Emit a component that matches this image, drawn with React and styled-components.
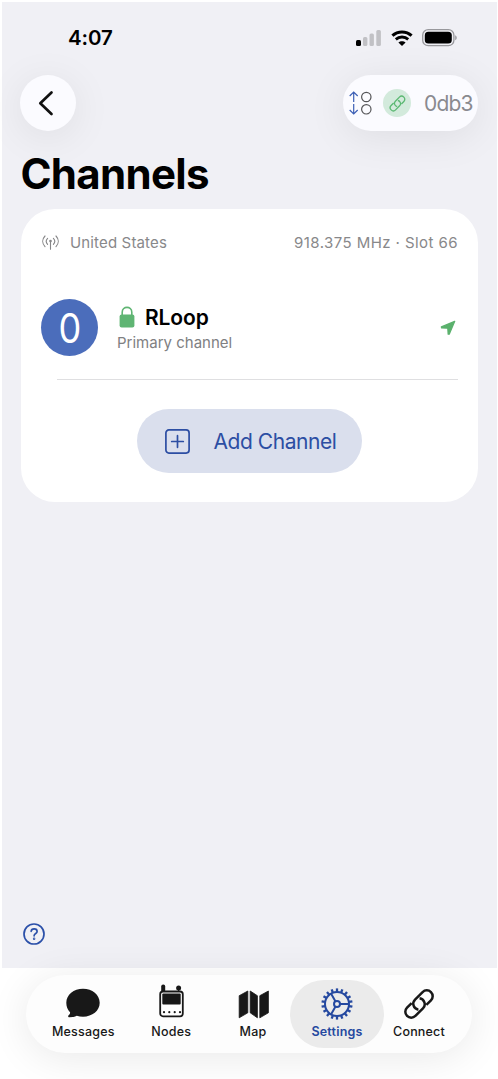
import React from "react";
import styled, { createGlobalStyle } from "styled-components";

const GlobalStyle = createGlobalStyle`
	* {
		box-sizing: border-box;
	}
	body {
		margin: 0;
		background: #ffffff;
		font-family: Inter, "Liberation Sans", sans-serif;
	}
	svg {
		display: block;
		flex: none;
	}
`;

const Screen = styled.div`
	height: 1079px;
	padding: 2px 1px 0 2px;
	overflow: hidden;
	display: flex;
	flex-direction: column;
`;
const Main = styled.main`
	height: 966px;
	padding: 0 19px;
	background: #f0f0f5;
	display: flex;
	flex-direction: column;
`;
const StatusBar = styled.div`
	height: 73px;
	padding: 0 20px 0 47px;
	display: flex;
	align-items: center;
	justify-content: space-between;
`;
const Clock = styled.span`
	font-size: 20.5px;
	font-weight: 600;
	letter-spacing: -0.1px;
	line-height: 24px;
	margin-top: -2px;
`;
const StatusIcons = styled.div`
	display: flex;
	align-items: center;
	margin-top: -2px;
	gap: 9px;
`;
const NavBar = styled.div`
	height: 56px;
	display: flex;
	justify-content: space-between;
`;
const BackButton = styled.button`
	width: 56px;
	height: 56px;
	margin-left: -0.6px;
	padding: 0 0 0 16px;
	border: none;
	border-radius: 50%;
	background: #fbfbff;
	box-shadow: 0 6px 40px rgba(0, 0, 0, 0.08);
	display: flex;
	align-items: center;
`;
const StatusPill = styled.div`
	width: 135px;
	height: 56px;
	border-radius: 28px;
	background: #fbfbff;
	box-shadow: 0 6px 40px rgba(0, 0, 0, 0.08);
	display: flex;
	align-items: center;
	padding-left: 6px;
`;
const LinkBadge = styled.div`
	width: 28px;
	height: 28px;
	margin: 0 13px 0 11px;
	border-radius: 50%;
	background: #d3eadc;
	color: #5bb872;
	display: flex;
	align-items: center;
	justify-content: center;
`;
const NodeName = styled.span`
	color: #8a8a8f;
	font-size: 21px;
	letter-spacing: -0.8px;
`;
const Title = styled.h1`
	margin: 18px 0 10px -0.5px;
	font-size: 42px;
	font-weight: 700;
	line-height: 50px;
	letter-spacing: -0.7px;
`;
const Card = styled.section`
	height: 293px;
	padding: 0 20px;
	border-radius: 34px;
	background: #ffffff;
`;
const RadioInfo = styled.div`
	height: 67px;
	padding-left: 1px;
	display: flex;
	align-items: center;
	color: #88888a;
	font-size: 15px;
	letter-spacing: 0.15px;
`;
const Region = styled.span`
	flex: 1;
	margin-left: 11px;
`;
const Frequency = styled.span`
	letter-spacing: 0.43px;
`;
const ChannelRow = styled.div`
	height: 103px;
	padding-right: 2px;
	display: flex;
	align-items: center;
`;
const Avatar = styled.div`
	width: 57px;
	height: 57px;
	border-radius: 50%;
	background: #4b6dbb;
	color: #ffffff;
	font-size: 41px;
	font-weight: 400;
	display: flex;
	align-items: center;
	justify-content: center;
	span {
		transform: scaleX(0.88);
	}
`;
const ChannelText = styled.div`
	flex: 1;
	margin-left: 19px;
	padding-top: 4px;
`;
const ChannelName = styled.div`
	display: flex;
	align-items: center;
	gap: 10px;
	padding-left: 2px;
	font-size: 21px;
	font-weight: 600;
	line-height: 26px;
	letter-spacing: -0.1px;
	svg {
		margin-top: -1px;
	}
`;
const ChannelRole = styled.div`
	color: #808082;
	font-size: 15px;
	line-height: 24px;
`;
const Divider = styled.div`
	height: 1px;
	margin-left: 16px;
	background: #dfdfe1;
`;
const AddButton = styled.button`
	width: 225px;
	height: 64px;
	margin: 29px auto 0;
	padding: 0 0 0 28px;
	border: none;
	border-radius: 32px;
	background: #dadfed;
	color: #2c4ea3;
	font-family: inherit;
	font-size: 21px;
	letter-spacing: -0.45px;
	display: flex;
	align-items: center;
	gap: 23.5px;
`;
const HelpButton = styled.button`
	margin: auto 0 23px 2px;
	padding: 0;
	border: none;
	background: none;
	align-self: flex-start;
`;
const TabArea = styled.div`
	height: 111px;
	padding: 7px 25px 0 24px;
`;
const TabBar = styled.nav`
	height: 78px;
	padding: 5px 0 0 14px;
	border-radius: 39px;
	background: #fdfdfd;
	box-shadow: 0 5px 40px rgba(0, 0, 0, 0.09);
	display: flex;
`;
const Tab = styled.div`
	width: ${(props) => props.$width}px;
	height: 68px;
	border-radius: 34px;
	background: ${(props) => (props.$active ? "#ebebeb" : "transparent")};
	color: ${(props) => (props.$active ? "#2549a0" : "#181818")};
	display: flex;
	flex-direction: column;
	align-items: center;
`;
const TabIcon = styled.div`
	height: 43px;
	display: flex;
	padding-top: ${(props) => props.$top}px;
`;
const TabLabel = styled.span`
	font-size: 12.5px;
	font-weight: ${(props) => (props.$active ? 600 : 500)};
	line-height: 17px;
	letter-spacing: 0.2px;
`;

const SignalIcon = () => (
	<svg width="26" height="17" viewBox="0 0 26 17">
		<rect x="0" y="11" width="5" height="6" rx="1.5" fill="#000" />
		<g fill="#c1c1c5">
			<rect x="7" y="8" width="4.4" height="9" rx="1.5" />
			<rect x="13.5" y="4.5" width="4.4" height="12.5" rx="1.5" />
			<rect x="20.3" y="1" width="4.6" height="16" rx="1.5" />
		</g>
	</svg>
);

const WifiIcon = () => (
	<svg width="22" height="16" viewBox="0 0 22 16" fill="none" stroke="#000">
		<path d="M1.4 5.7C6.8 .7 15.2.7 20.6 5.7" strokeWidth="3" />
		<path d="M4.8 9.4c3.5-3.2 8.9-3.2 12.4 0" strokeWidth="2.8" />
		<path d="M7.4 12.5c2-1.8 5.2-1.8 7.2 0L11 16z" fill="#000" stroke="none" />
	</svg>
);

const BatteryIcon = () => (
	<svg width="36" height="18" viewBox="0 0 36 18">
		<rect x=".7" y=".7" width="31.2" height="16" rx="5.5" fill="none" stroke="#98989c" strokeWidth="1.3" />
		<rect x="2.8" y="2.8" width="27" height="11.8" rx="3.6" fill="#000" />
		<path d="M33.2 6.2c2 .7 2 4.3 0 5z" fill="#98989c" />
	</svg>
);

const TransferIcon = () => (
	<svg width="23" height="24" viewBox="0 0 23 24" fill="none" strokeWidth="1.2">
		<path d="M4.7 11V1M.7 5l4-4 4 4M4.7 13v10M.7 19l4 4 4-4" stroke="#3c5fb5" />
		<circle cx="17.3" cy="6" r="4.7" stroke="#555558" />
		<circle cx="17.3" cy="18.3" r="4.7" stroke="#555558" />
	</svg>
);

// two open links on one axis, turned 45 degrees
const LinkIcon = ({ size, stroke }) => (
	<svg width={size} height={size} viewBox="0 0 32 32" fill="none" stroke="currentColor" strokeWidth={stroke}>
		<g transform="rotate(-45 16 16)">
			<path d="M20.5 21.9H27a5.9 5.9 0 0 0 0-11.800H16.300a5.900 5.900 0 0 0-4.700 9.500" />
			<path d="M11.5 10.100H5a5.900 5.900 0 0 0 0 11.800H15.700a5.900 5.900 0 0 0 4.700-9.500" />
		</g>
	</svg>
);

const AntennaIcon = () => (
	<svg width="17" height="15" viewBox="0 0 17 15" fill="none" stroke="#858587" strokeWidth="1.1" strokeLinecap="round">
		<path d="M3 1c-3 3.2-3 7.500 0 10.600M5.600 3.300c-1.700 1.800-1.700 4.200 0 6M14 1c3 3.200 3 7.500 0 10.600M11.400 3.300c1.700 1.800 1.700 4.200 0 6M8.500 6v8.200" />
		<circle cx="8.5" cy="6" r="1.3" fill="#858587" stroke="none" />
	</svg>
);

const LockIcon = () => (
	<svg width="16" height="22" viewBox="0 0 16 22">
		<path d="M3.2 10V6.2c0-6.4 9.6-6.4 9.6 0V10" fill="none" stroke="#5fb573" strokeWidth="1.6" />
		<rect x=".6" y="8.5" width="14.8" height="13" rx="2" fill="#5fb573" />
	</svg>
);

const LocationIcon = () => (
	<svg width="16" height="16" viewBox="0 0 16 16">
		<path d="M14.700 1.300 1.400 6.900 1.600 7.900 7.800 8.200 8.200 14.200 9.200 14.200z" fill="#5bb16d" stroke="#5bb16d" strokeWidth="1.3" strokeLinejoin="round" />
	</svg>
);

const PlusSquareIcon = () => (
	<svg width="25" height="25" viewBox="0 0 25 25" fill="none" stroke="currentColor" strokeWidth="1.7" strokeLinecap="round">
		<rect x=".9" y=".9" width="23.2" height="23.2" rx="3" />
		<path d="M12.5 6.700v11.600M6.700 12.500h11.600" />
	</svg>
);

const HelpIcon = () => (
	<svg width="22" height="22" viewBox="0 0 22 22" fill="none" stroke="#2b50a9" strokeWidth="1.7" strokeLinecap="round">
		<circle cx="11" cy="11" r="10" />
		<path d="M8.200 8.300c.2-3.200 5.900-3.100 5.900.1 0 2.100-3 2-3 4.400" />
		<circle cx="11.1" cy="15.7" r=".4" />
	</svg>
);

const BubbleIcon = () => (
	<svg width="34" height="30" viewBox="0 0 34 30" fill="currentColor">
		<path d="M17 .8c9.300 0 16.700 6 16.700 14S26.300 28.700 17 28.700c-2.300 0-4.300-.3-6.200-1-2.200 1-4.700 1.500-7.300 1.500-1.500 0-1.900-1.100-.9-1.900 1.300-1.100 1.700-2.200 1.400-3C1.600 21.900.3 18.700.3 14.800.3 6.800 7.700.8 17 .8z" />
	</svg>
);

const RadioIcon = () => (
	<svg width="25" height="34" viewBox="0 0 25 34">
		<rect x="2.2" y=".6" width="4" height="9" rx="1.9" fill="currentColor" />
		<circle cx="19.6" cy="4" r="2.5" fill="currentColor" />
		<path d="M19.600 5v3" stroke="currentColor" strokeWidth="1.2" />
		<rect x="1.2" y="7.500" width="22.6" height="24.8" rx="2.8" fill="#fff" stroke="currentColor" strokeWidth="1.8" />
		<rect x="3.3" y="9.400" width="18.4" height="11" rx="1" fill="currentColor" />
		<g fill="currentColor">
			<circle cx="5" cy="28.2" r="1.1" />
			<circle cx="10.3" cy="28.2" r="1.1" />
			<circle cx="15.7" cy="28.2" r="1.1" />
			<circle cx="21" cy="28.2" r="1.1" />
		</g>
	</svg>
);

const MapIcon = () => (
	<svg width="31" height="29" viewBox="0 0 31 29" fill="currentColor" stroke="currentColor" strokeWidth=".8" strokeLinejoin="round">
		<path d="M1.200 5.700 9.800 1v21.800L1.200 27.800z" />
		<path d="M12.200 1l7.200 4.700v22.100l-7.200-5z" />
		<path d="M21.800 5.700 30.400 1v21.800L21.800 27.800z" />
	</svg>
);

const teeth = Array.from({ length: 18 }, (_, i) => i * 20);

const GearIcon = () => (
	<svg width="32" height="32" viewBox="0 0 32 32" fill="none" stroke="currentColor" strokeWidth="2">
		<circle cx="16" cy="16" r="12" />
		<circle cx="16" cy="16" r="3" />
		<path d="M19 16h9M14.500 13.400 10 5.600M14.500 18.600 10 26.400" />
		{teeth.map((angle) => (
			<path key={angle} d="M16 .4v3.500" strokeWidth="2.3" transform={`rotate(${angle} 16 16)`} />
		))}
	</svg>
);

const tabs = [
	{ label: "Messages", width: 86.5, top: 8, icon: <BubbleIcon /> },
	{ label: "Nodes", width: 89.5, top: 4, icon: <RadioIcon /> },
	{ label: "Map", width: 74, top: 10, icon: <MapIcon /> },
	{ label: "Settings", width: 94, top: 8, icon: <GearIcon />, active: true },
	{ label: "Connect", width: 70, top: 8, icon: <LinkIcon size={32} stroke={2.5} /> },
];

const App = () => {
	return (
		<Screen>
			<GlobalStyle />
			<Main>
				<StatusBar>
					<Clock>4:07</Clock>
					<StatusIcons>
						<SignalIcon />
						<WifiIcon />
						<BatteryIcon />
					</StatusIcons>
				</StatusBar>
				<NavBar>
					<BackButton aria-label="Back">
						<svg width="18" height="26" viewBox="0 0 18 26" fill="none" stroke="#111" strokeWidth="2.7" strokeLinecap="round" strokeLinejoin="round">
							<path d="M15.500 2.500 4.300 13.200l11.200 10.800" />
						</svg>
					</BackButton>
					<StatusPill>
						<TransferIcon />
						<LinkBadge>
							<LinkIcon size={17} stroke={2.5} />
						</LinkBadge>
						<NodeName>0db3</NodeName>
					</StatusPill>
				</NavBar>
				<Title>Channels</Title>
				<Card>
					<RadioInfo>
						<AntennaIcon />
						<Region>United States</Region>
						<Frequency>918.375 MHz · Slot 66</Frequency>
					</RadioInfo>
					<ChannelRow>
						<Avatar>
							<span>0</span>
						</Avatar>
						<ChannelText>
							<ChannelName>
								<LockIcon />
								RLoop
							</ChannelName>
							<ChannelRole>Primary channel</ChannelRole>
						</ChannelText>
						<LocationIcon />
					</ChannelRow>
					<Divider />
					<AddButton>
						<PlusSquareIcon />
						Add Channel
					</AddButton>
				</Card>
				<HelpButton aria-label="Help">
					<HelpIcon />
				</HelpButton>
			</Main>
			<TabArea>
				<TabBar>
					{tabs.map((tab) => (
						<Tab key={tab.label} $width={tab.width} $active={tab.active}>
							<TabIcon $top={tab.top}>{tab.icon}</TabIcon>
							<TabLabel $active={tab.active}>{tab.label}</TabLabel>
						</Tab>
					))}
				</TabBar>
			</TabArea>
		</Screen>
	);
};

export default App;
